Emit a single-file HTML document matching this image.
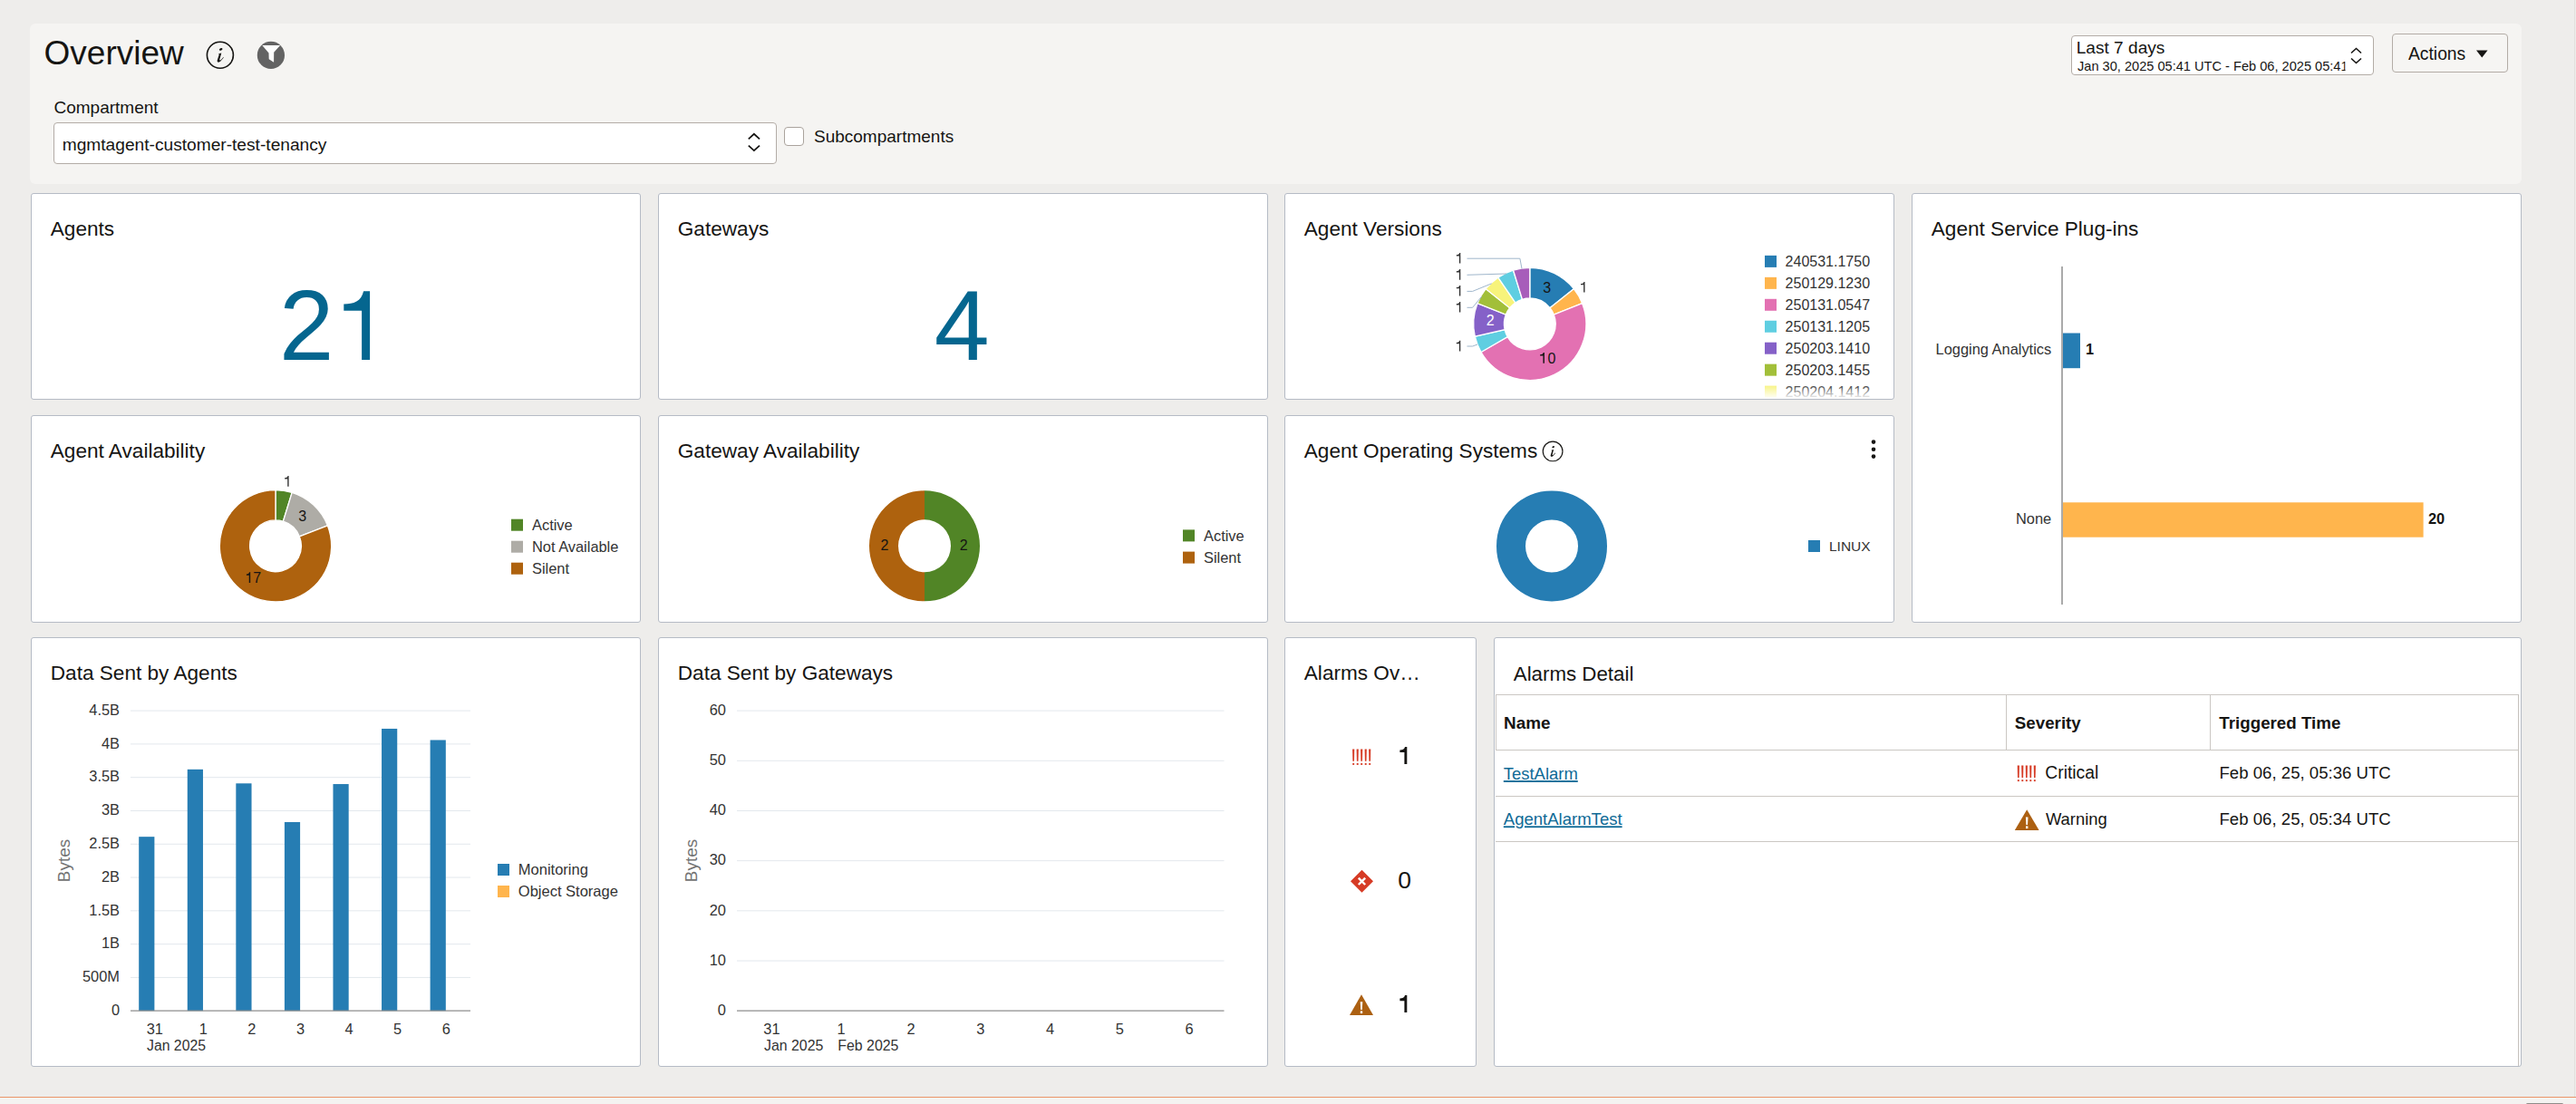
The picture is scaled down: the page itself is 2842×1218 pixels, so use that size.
<!DOCTYPE html>
<html><head><meta charset="utf-8"><title>Overview</title>
<style>
html,body{margin:0;padding:0}
body{width:2842px;height:1218px;overflow:hidden;position:relative;background:#eeedeb;font-family:"Liberation Sans", sans-serif;}
.t{position:absolute;white-space:nowrap;line-height:1;}
.card{position:absolute;box-sizing:border-box;background:#fff;border:1px solid #b5bbc5;border-radius:3px;}
svg text{font-family:"Liberation Sans", sans-serif;}
</style></head><body>
<div style="position:absolute;left:33px;top:26px;width:2749px;height:177px;background:#f5f4f2;border-radius:6px;"></div><div style="position:absolute;left:0px;top:1209.5px;width:2842px;height:1.5px;background:#ea9468;"></div><div style="position:absolute;left:0px;top:1211px;width:2842px;height:7px;background:#f4f3f1;"></div><div style="position:absolute;left:2786.5px;top:1216.5px;width:41.0px;height:3.5px;background:#8f8c89;border-radius:3px;"></div><div style="position:absolute;left:2839.5px;top:0px;width:1.0px;height:1209.5px;background:#e2e0dd;"></div><div style="position:absolute;left:59px;top:135px;width:798px;height:46px;box-sizing:border-box;background:#fff;border:1px solid #b3aca6;border-radius:4px"></div><div style="position:absolute;left:865px;top:140px;width:21.5px;height:21px;box-sizing:border-box;background:#fff;border:1px solid #aaa39d;border-radius:4px"></div><div style="position:absolute;left:2285px;top:39px;width:334px;height:44px;box-sizing:border-box;background:#fff;border:1px solid #b3aca6;border-radius:4px;overflow:hidden"></div><div style="position:absolute;left:2639px;top:37px;width:128px;height:43px;box-sizing:border-box;background:#f6f5f3;border:1px solid #b3aca6;border-radius:4px"></div><div class="card" style="left:34px;top:213px;width:673px;height:228px"></div><div class="card" style="left:726px;top:213px;width:673px;height:228px"></div><div class="card" style="left:1417px;top:213px;width:673px;height:228px"></div><div class="card" style="left:2109px;top:213px;width:673px;height:474px"></div><div class="card" style="left:34px;top:458px;width:673px;height:229px"></div><div class="card" style="left:726px;top:458px;width:673px;height:229px"></div><div class="card" style="left:1417px;top:458px;width:673px;height:229px"></div><div class="card" style="left:34px;top:703px;width:673px;height:474px"></div><div class="card" style="left:726px;top:703px;width:673px;height:474px"></div><div class="card" style="left:1417px;top:703px;width:212px;height:474px"></div><div class="card" style="left:1648px;top:703px;width:1134px;height:474px"></div><div style="position:absolute;left:1650px;top:766px;width:1128.5px;height:62px;box-sizing:border-box;border:1px solid #cbc7c3;border-right:1px solid #cbc7c3"></div><div style="position:absolute;left:2213px;top:767px;width:1px;height:60px;background:#cbc7c3;"></div><div style="position:absolute;left:2438px;top:767px;width:1px;height:60px;background:#cbc7c3;"></div><div style="position:absolute;left:2777.5px;top:766px;width:1.0px;height:410px;background:#c5c1bc;"></div><div style="position:absolute;left:1650px;top:878px;width:1128px;height:1px;background:#cbc7c3;"></div><div style="position:absolute;left:1650px;top:928px;width:1128px;height:1px;background:#cbc7c3;"></div>
<svg width="2842" height="1218" viewBox="0 0 2842 1218" style="position:absolute;left:0;top:0">
<text x="48.60" y="71.20" font-size="37" fill="#161513" text-anchor="start">Overview</text><circle cx="242.9" cy="60.8" r="14.5" fill="none" stroke="#161513" stroke-width="1.6"/><g transform="translate(242.9,60.8) scale(1.0)"><ellipse cx="0.8" cy="-6.4" rx="1.9" ry="1.2" transform="rotate(-28 0.8 -6.4)" fill="#161513"/><path d="M-2.1,-1.4 L1.4,-2.4 L-0.7,5.2 Q-0.4,6.2 0.9,5.1 L3.6,2.3 L3.9,2.7 L0.5,6.7 Q-1.6,8.5 -2.9,7.5 Q-3.5,6.8 -3.1,5.5 L-1.2,-0.5 Q-1.3,-1.1 -2.1,-1.2 Z" fill="#161513"/></g><circle cx="298.9" cy="60.9" r="15.1" fill="#636363"/><path d="M289.3,49.9 L309.1,49.9 L302.2,57.7 L302.1,68.7 L296.7,65.2 L296.5,58.4 Z" fill="#fff"/><text x="59.50" y="125.20" font-size="19.0" fill="#161513" text-anchor="start">Compartment</text><text x="68.70" y="166.00" font-size="19.16" fill="#161513" text-anchor="start">mgmtagent-customer-test-tenancy</text><path d="M825.8,153.3 L831.9,147.8 L838,153.3" fill="none" stroke="#161513" stroke-width="1.8"/><path d="M825.8,160.6 L831.9,166.1 L838,160.6" fill="none" stroke="#161513" stroke-width="1.8"/><text x="898.00" y="156.90" font-size="19" fill="#161513" text-anchor="start">Subcompartments</text><text x="2290.70" y="59.30" font-size="19.1" fill="#161513" text-anchor="start">Last 7 days</text><clipPath id="dclip"><rect x="2290" y="62" width="297.5" height="20"/></clipPath><text x="2292.00" y="78.30" font-size="14.6" fill="#161513" text-anchor="start" clip-path="url(#dclip)">Jan 30, 2025 05:41 UTC - Feb 06, 2025 05:41 UTC</text><path d="M2594,58.5 L2599.5,53.5 L2605,58.5" fill="none" stroke="#161513" stroke-width="1.6"/><path d="M2594,64.5 L2599.5,69.5 L2605,64.5" fill="none" stroke="#161513" stroke-width="1.6"/><text x="2657.00" y="65.50" font-size="19.3" fill="#161513" text-anchor="start">Actions</text><path d="M2732,55.5 L2744.5,55.5 L2738.25,63.5 Z" fill="#161513"/><text x="55.80" y="259.90" font-size="22.6" fill="#161513" text-anchor="start">Agents</text><text x="747.80" y="259.90" font-size="22.6" fill="#161513" text-anchor="start">Gateways</text><text x="1438.80" y="259.90" font-size="22.6" fill="#161513" text-anchor="start">Agent Versions</text><text x="2130.80" y="259.90" font-size="22.6" fill="#161513" text-anchor="start">Agent Service Plug-ins</text><text x="55.80" y="504.90" font-size="22.6" fill="#161513" text-anchor="start">Agent Availability</text><text x="747.80" y="504.90" font-size="22.6" fill="#161513" text-anchor="start">Gateway Availability</text><text x="1438.80" y="504.90" font-size="22.6" fill="#161513" text-anchor="start">Agent Operating Systems</text><text x="55.80" y="749.90" font-size="22.6" fill="#161513" text-anchor="start">Data Sent by Agents</text><text x="747.80" y="749.90" font-size="22.6" fill="#161513" text-anchor="start">Data Sent by Gateways</text><text x="1438.80" y="749.90" font-size="22.6" fill="#161513" text-anchor="start">Alarms Ov…</text><text x="1669.80" y="751.40" font-size="22.3" fill="#161513" text-anchor="start">Alarms Detail</text><text x="308.09" y="397.00" font-size="108.5" fill="#05668f" text-anchor="start">2</text><path d="M399.1,397 L408.1,397 L408.1,321.2 L401.1,321.2 C398.6,332.4 390.3,335.4 379.3,335.4 L379.3,342.7 L399.1,342.7 Z" fill="#05668f"/><text x="1061.30" y="397.30" font-size="109.5" fill="#05668f" text-anchor="middle">4</text><path d="M1687.80,295.30 A62.1,62.1 0 0 1 1736.35,318.68 L1710.00,339.69 A28.4,28.4 0 0 0 1687.80,329.00 Z" fill="#267db3" stroke="#fff" stroke-width="1.3" stroke-linejoin="miter"/><path d="M1736.35,318.68 A62.1,62.1 0 0 1 1745.61,334.71 L1714.24,347.02 A28.4,28.4 0 0 0 1710.00,339.69 Z" fill="#ffb54d" stroke="#fff" stroke-width="1.3" stroke-linejoin="miter"/><path d="M1745.61,334.71 A62.1,62.1 0 0 1 1634.02,388.45 L1663.20,371.60 A28.4,28.4 0 0 0 1714.24,347.02 Z" fill="#e371b2" stroke="#fff" stroke-width="1.3" stroke-linejoin="miter"/><path d="M1634.02,388.45 A62.1,62.1 0 0 1 1627.26,371.22 L1660.11,363.72 A28.4,28.4 0 0 0 1663.20,371.60 Z" fill="#5fcee1" stroke="#fff" stroke-width="1.3" stroke-linejoin="miter"/><path d="M1627.26,371.22 A62.1,62.1 0 0 1 1629.99,334.71 L1661.36,347.02 A28.4,28.4 0 0 0 1660.11,363.72 Z" fill="#8561c8" stroke="#fff" stroke-width="1.3" stroke-linejoin="miter"/><path d="M1629.99,334.71 A62.1,62.1 0 0 1 1639.25,318.68 L1665.60,339.69 A28.4,28.4 0 0 0 1661.36,347.02 Z" fill="#a2bf39" stroke="#fff" stroke-width="1.3" stroke-linejoin="miter"/><path d="M1639.25,318.68 A62.1,62.1 0 0 1 1652.82,306.09 L1671.80,333.93 A28.4,28.4 0 0 0 1665.60,339.69 Z" fill="#f7f37b" stroke="#fff" stroke-width="1.3" stroke-linejoin="miter"/><path d="M1652.82,306.09 A62.1,62.1 0 0 1 1669.50,298.06 L1679.43,330.26 A28.4,28.4 0 0 0 1671.80,333.93 Z" fill="#5fcee1" stroke="#fff" stroke-width="1.3" stroke-linejoin="miter"/><path d="M1669.50,298.06 A62.1,62.1 0 0 1 1687.80,295.30 L1687.80,329.00 A28.4,28.4 0 0 0 1679.43,330.26 Z" fill="#a75dba" stroke="#fff" stroke-width="1.3" stroke-linejoin="miter"/><polyline points="1618.5,285.2 1676.9,285.2 1679,296.5" fill="none" stroke="#9fb6cb" stroke-width="1"/><polyline points="1618.5,303.3 1662,302" fill="none" stroke="#9fb6cb" stroke-width="1"/><polyline points="1618.5,321.4 1624.6,321.4 1645.7,312.8" fill="none" stroke="#9fb6cb" stroke-width="1"/><polyline points="1618.5,339.3 1624.6,339.3 1634.8,327" fill="none" stroke="#9fb6cb" stroke-width="1"/><polyline points="1618.5,382 1624.6,382 1630,380" fill="none" stroke="#9fb6cb" stroke-width="1"/><path d="M1609.90,290.60 L1611.30,290.60 L1611.30,279.00 L1610.21,279.00 C1609.83,280.71 1608.51,281.16 1606.80,281.16 L1606.80,282.41 L1609.90,282.41 Z" fill="#333333"/><path d="M1609.90,308.70 L1611.30,308.70 L1611.30,297.10 L1610.21,297.10 C1609.83,298.81 1608.51,299.26 1606.80,299.26 L1606.80,300.51 L1609.90,300.51 Z" fill="#333333"/><path d="M1609.90,326.50 L1611.30,326.50 L1611.30,314.90 L1610.21,314.90 C1609.83,316.61 1608.51,317.06 1606.80,317.06 L1606.80,318.31 L1609.90,318.31 Z" fill="#333333"/><path d="M1609.90,344.60 L1611.30,344.60 L1611.30,333.00 L1610.21,333.00 C1609.83,334.71 1608.51,335.16 1606.80,335.16 L1606.80,336.41 L1609.90,336.41 Z" fill="#333333"/><path d="M1609.90,387.40 L1611.30,387.40 L1611.30,375.80 L1610.21,375.80 C1609.83,377.51 1608.51,377.96 1606.80,377.96 L1606.80,379.21 L1609.90,379.21 Z" fill="#333333"/><path d="M1747.10,322.50 L1748.50,322.50 L1748.50,310.90 L1747.41,310.90 C1747.03,312.61 1745.71,313.06 1744.00,313.06 L1744.00,314.31 L1747.10,314.31 Z" fill="#333333"/><text x="1706.8" y="322.8" font-size="16" fill="#161513" text-anchor="middle">3</text><path d="M1702.45,400.80 L1703.90,400.80 L1703.90,389.10 L1702.77,389.10 C1702.38,390.82 1700.92,391.28 1699.10,391.28 L1699.10,392.53 L1702.45,392.53 Z" fill="#161513"/><text x="1707.4759999999999" y="400.8" font-size="16" fill="#161513" text-anchor="start">0</text><text x="1644.3" y="358.8" font-size="16" fill="#ffffff" text-anchor="middle">2</text><defs><linearGradient id="fade" x1="0" y1="0" x2="0" y2="1"><stop offset="0" stop-color="#fff" stop-opacity="0"/><stop offset="1" stop-color="#fff" stop-opacity="1"/></linearGradient></defs><rect x="1947" y="281.9" width="13" height="13" fill="#267db3"/><text x="1969.6" y="294.2" font-size="16.0" fill="#333333" text-anchor="start">240531.1750</text><rect x="1947" y="305.84999999999997" width="13" height="13" fill="#ffb54d"/><text x="1969.6" y="318.15" font-size="16.0" fill="#333333" text-anchor="start">250129.1230</text><rect x="1947" y="329.79999999999995" width="13" height="13" fill="#e371b2"/><text x="1969.6" y="342.09999999999997" font-size="16.0" fill="#333333" text-anchor="start">250131.0547</text><rect x="1947" y="353.75" width="13" height="13" fill="#5fcee1"/><text x="1969.6" y="366.05" font-size="16.0" fill="#333333" text-anchor="start">250131.1205</text><rect x="1947" y="377.7" width="13" height="13" fill="#8561c8"/><text x="1969.6" y="390.0" font-size="16.0" fill="#333333" text-anchor="start">250203.1410</text><rect x="1947" y="401.65" width="13" height="13" fill="#a2bf39"/><text x="1969.6" y="413.95" font-size="16.0" fill="#333333" text-anchor="start">250203.1455</text><rect x="1947" y="425.59999999999997" width="13" height="13" fill="#f7f37b"/><text x="1969.6" y="437.9" font-size="16.0" fill="#333333" text-anchor="start">250204.1412</text><rect x="1940" y="424" width="140" height="16" fill="url(#fade)"/><line x1="2275" y1="294" x2="2275" y2="667" stroke="#8e8e8e" stroke-width="1.5"/><rect x="2276" y="367.5" width="19" height="38.7" fill="#267db3"/><rect x="2276" y="554.3" width="397.6" height="38.4" fill="#ffb54d"/><text x="2263.2" y="391" font-size="16.4" fill="#333333" text-anchor="end">Logging Analytics</text><text x="2263.2" y="577.9" font-size="16.4" fill="#333333" text-anchor="end">None</text><text x="2301" y="391" font-size="16.4" fill="#161513" text-anchor="start" font-weight="700">1</text><text x="2679" y="577.9" font-size="16.4" fill="#161513" text-anchor="start" font-weight="700">20</text><path d="M304.00,540.65 A61.65,61.65 0 0 1 322.17,543.39 L312.36,575.21 A28.35,28.35 0 0 0 304.00,573.95 Z" fill="#518526" stroke="#fff" stroke-width="1.3" stroke-linejoin="miter"/><path d="M322.17,543.39 A61.65,61.65 0 0 1 361.39,579.78 L330.39,591.94 A28.35,28.35 0 0 0 312.36,575.21 Z" fill="#aeaca6" stroke="#fff" stroke-width="1.3" stroke-linejoin="miter"/><path d="M361.39,579.78 A61.65,61.65 0 1 1 304.00,540.65 L304.00,573.95 A28.35,28.35 0 1 0 330.39,591.94 Z" fill="#ae620e" stroke="#fff" stroke-width="1.3" stroke-linejoin="miter"/><path d="M317.20,536.70 L318.60,536.70 L318.60,525.10 L317.51,525.10 C317.13,526.81 315.81,527.26 314.10,527.26 L314.10,528.51 L317.20,528.51 Z" fill="#333333"/><text x="333.6" y="574.8" font-size="16" fill="#161513" text-anchor="middle">3</text><path d="M274.75,642.90 L276.20,642.90 L276.20,631.20 L275.07,631.20 C274.68,632.92 273.53,633.38 271.90,633.38 L271.90,634.63 L274.75,634.63 Z" fill="#161513"/><text x="279.2392" y="642.9" font-size="16" fill="#161513" text-anchor="start">7</text><rect x="564" y="572.7" width="13" height="13" fill="#518526"/><text x="587" y="584.8000000000001" font-size="16.4" fill="#333333" text-anchor="start">Active</text><rect x="564" y="596.7" width="13" height="13" fill="#aeaca6"/><text x="587" y="608.8000000000001" font-size="16.4" fill="#333333" text-anchor="start">Not Available</text><rect x="564" y="620.7" width="13" height="13" fill="#ae620e"/><text x="587" y="632.8000000000001" font-size="16.4" fill="#333333" text-anchor="start">Silent</text><path d="M1020.00,541.30 A61,61 0 0 1 1020.00,663.30 L1020.00,631.30 A29,29 0 0 0 1020.00,573.30 Z" fill="#518526"/><path d="M1020.00,663.30 A61,61 0 0 1 1020.00,541.30 L1020.00,573.30 A29,29 0 0 0 1020.00,631.30 Z" fill="#ae620e"/><text x="976" y="607.3" font-size="16" fill="#161513" text-anchor="middle">2</text><text x="1063.2" y="607.3" font-size="16" fill="#161513" text-anchor="middle">2</text><rect x="1305" y="584.4" width="13" height="13" fill="#518526"/><text x="1328" y="596.5" font-size="16.4" fill="#333333" text-anchor="start">Active</text><rect x="1305" y="608.6" width="13" height="13" fill="#ae620e"/><text x="1328" y="620.7" font-size="16.4" fill="#333333" text-anchor="start">Silent</text><circle cx="1713.1" cy="497.9" r="10.85" fill="none" stroke="#161513" stroke-width="1.15"/><g transform="translate(1713.1,497.9) scale(0.7482758620689655)"><ellipse cx="0.8" cy="-6.4" rx="1.9" ry="1.2" transform="rotate(-28 0.8 -6.4)" fill="#161513"/><path d="M-2.1,-1.4 L1.4,-2.4 L-0.7,5.2 Q-0.4,6.2 0.9,5.1 L3.6,2.3 L3.9,2.7 L0.5,6.7 Q-1.6,8.5 -2.9,7.5 Q-3.5,6.8 -3.1,5.5 L-1.2,-0.5 Q-1.3,-1.1 -2.1,-1.2 Z" fill="#161513"/></g><circle cx="2067" cy="487.6" r="2.3" fill="#161513"/><circle cx="2067" cy="495.8" r="2.3" fill="#161513"/><circle cx="2067" cy="503.6" r="2.3" fill="#161513"/><circle cx="1712" cy="602.4" r="45.0" fill="none" stroke="#267db3" stroke-width="32"/><rect x="1995" y="596" width="13" height="13" fill="#267db3"/><text x="2018" y="608.1" font-size="15.5" fill="#333333" text-anchor="start">LINUX</text><text x="132" y="1120.0" font-size="16.4" fill="#333333" text-anchor="end">0</text><line x1="144" y1="1078.41" x2="519" y2="1078.41" stroke="#e3e8ed" stroke-width="1"/><text x="132" y="1083.211111111111" font-size="16.4" fill="#333333" text-anchor="end">500M</text><line x1="144" y1="1041.62" x2="519" y2="1041.62" stroke="#e3e8ed" stroke-width="1"/><text x="132" y="1046.4222222222222" font-size="16.4" fill="#333333" text-anchor="end">1B</text><line x1="144" y1="1004.83" x2="519" y2="1004.83" stroke="#e3e8ed" stroke-width="1"/><text x="132" y="1009.6333333333333" font-size="16.4" fill="#333333" text-anchor="end">1.5B</text><line x1="144" y1="968.04" x2="519" y2="968.04" stroke="#e3e8ed" stroke-width="1"/><text x="132" y="972.8444444444444" font-size="16.4" fill="#333333" text-anchor="end">2B</text><line x1="144" y1="931.26" x2="519" y2="931.26" stroke="#e3e8ed" stroke-width="1"/><text x="132" y="936.0555555555555" font-size="16.4" fill="#333333" text-anchor="end">2.5B</text><line x1="144" y1="894.47" x2="519" y2="894.47" stroke="#e3e8ed" stroke-width="1"/><text x="132" y="899.2666666666667" font-size="16.4" fill="#333333" text-anchor="end">3B</text><line x1="144" y1="857.68" x2="519" y2="857.68" stroke="#e3e8ed" stroke-width="1"/><text x="132" y="862.4777777777778" font-size="16.4" fill="#333333" text-anchor="end">3.5B</text><line x1="144" y1="820.89" x2="519" y2="820.89" stroke="#e3e8ed" stroke-width="1"/><text x="132" y="825.6888888888889" font-size="16.4" fill="#333333" text-anchor="end">4B</text><line x1="144" y1="784.10" x2="519" y2="784.10" stroke="#e3e8ed" stroke-width="1"/><text x="132" y="788.9" font-size="16.4" fill="#333333" text-anchor="end">4.5B</text><rect x="153.19" y="923.16" width="17.2" height="192.04" fill="#267db3"/><text x="170.79" y="1140.8" font-size="16.4" fill="#333333" text-anchor="middle">31</text><rect x="206.76" y="848.85" width="17.2" height="266.35" fill="#267db3"/><text x="224.36" y="1140.8" font-size="16.4" fill="#333333" text-anchor="middle">1</text><rect x="260.33" y="864.30" width="17.2" height="250.90" fill="#267db3"/><text x="277.93" y="1140.8" font-size="16.4" fill="#333333" text-anchor="middle">2</text><rect x="313.90" y="906.97" width="17.2" height="208.23" fill="#267db3"/><text x="331.50" y="1140.8" font-size="16.4" fill="#333333" text-anchor="middle">3</text><rect x="367.47" y="865.04" width="17.2" height="250.16" fill="#267db3"/><text x="385.07" y="1140.8" font-size="16.4" fill="#333333" text-anchor="middle">4</text><rect x="421.04" y="803.97" width="17.2" height="311.23" fill="#267db3"/><text x="438.64" y="1140.8" font-size="16.4" fill="#333333" text-anchor="middle">5</text><rect x="474.61" y="816.47" width="17.2" height="298.73" fill="#267db3"/><text x="492.21" y="1140.8" font-size="16.4" fill="#333333" text-anchor="middle">6</text><line x1="144" y1="1115.2" x2="519" y2="1115.2" stroke="#8e8e8e" stroke-width="1.3"/><text x="162" y="1158.8" font-size="15.8" fill="#333333" text-anchor="start">Jan 2025</text><text x="0" y="0" font-size="18.9" fill="#737373" text-anchor="middle" transform="translate(77,949.5) rotate(-90)">Bytes</text><rect x="549" y="953.0" width="13" height="13" fill="#267db3"/><text x="571.8" y="965.1" font-size="16.5" fill="#333333" text-anchor="start">Monitoring</text><rect x="549" y="977.0" width="13" height="13" fill="#ffb54d"/><text x="571.8" y="989.1" font-size="16.5" fill="#333333" text-anchor="start">Object Storage</text><text x="800.9" y="1120.0" font-size="16.4" fill="#333333" text-anchor="end">0</text><line x1="813" y1="1060.02" x2="1350.5" y2="1060.02" stroke="#e3e8ed" stroke-width="1"/><text x="800.9" y="1064.8166666666666" font-size="16.4" fill="#333333" text-anchor="end">10</text><line x1="813" y1="1004.83" x2="1350.5" y2="1004.83" stroke="#e3e8ed" stroke-width="1"/><text x="800.9" y="1009.6333333333333" font-size="16.4" fill="#333333" text-anchor="end">20</text><line x1="813" y1="949.65" x2="1350.5" y2="949.65" stroke="#e3e8ed" stroke-width="1"/><text x="800.9" y="954.45" font-size="16.4" fill="#333333" text-anchor="end">30</text><line x1="813" y1="894.47" x2="1350.5" y2="894.47" stroke="#e3e8ed" stroke-width="1"/><text x="800.9" y="899.2666666666667" font-size="16.4" fill="#333333" text-anchor="end">40</text><line x1="813" y1="839.28" x2="1350.5" y2="839.28" stroke="#e3e8ed" stroke-width="1"/><text x="800.9" y="844.0833333333333" font-size="16.4" fill="#333333" text-anchor="end">50</text><line x1="813" y1="784.10" x2="1350.5" y2="784.10" stroke="#e3e8ed" stroke-width="1"/><text x="800.9" y="788.9" font-size="16.4" fill="#333333" text-anchor="end">60</text><line x1="813" y1="1115.2" x2="1350.5" y2="1115.2" stroke="#8e8e8e" stroke-width="1.3"/><text x="851.39" y="1140.8" font-size="16.4" fill="#333333" text-anchor="middle">31</text><text x="928.18" y="1140.8" font-size="16.4" fill="#333333" text-anchor="middle">1</text><text x="1004.96" y="1140.8" font-size="16.4" fill="#333333" text-anchor="middle">2</text><text x="1081.75" y="1140.8" font-size="16.4" fill="#333333" text-anchor="middle">3</text><text x="1158.54" y="1140.8" font-size="16.4" fill="#333333" text-anchor="middle">4</text><text x="1235.32" y="1140.8" font-size="16.4" fill="#333333" text-anchor="middle">5</text><text x="1312.11" y="1140.8" font-size="16.4" fill="#333333" text-anchor="middle">6</text><text x="843" y="1158.8" font-size="15.9" fill="#333333" text-anchor="start">Jan 2025</text><text x="924.3" y="1158.8" font-size="15.9" fill="#333333" text-anchor="start">Feb 2025</text><text x="0" y="0" font-size="18.9" fill="#737373" text-anchor="middle" transform="translate(769.2,949.5) rotate(-90)">Bytes</text><path d="M1492.10,826.40 L1494.30,826.40 L1494.00,839.70 L1492.40,839.70 Z" fill="#d63b25"/><rect x="1492.25" y="842.00" width="1.90" height="1.90" fill="#d63b25"/><path d="M1496.60,826.40 L1498.80,826.40 L1498.50,839.70 L1496.90,839.70 Z" fill="#d63b25"/><rect x="1496.75" y="842.00" width="1.90" height="1.90" fill="#d63b25"/><path d="M1501.10,826.40 L1503.30,826.40 L1503.00,839.70 L1501.40,839.70 Z" fill="#d63b25"/><rect x="1501.25" y="842.00" width="1.90" height="1.90" fill="#d63b25"/><path d="M1505.60,826.40 L1507.80,826.40 L1507.50,839.70 L1505.90,839.70 Z" fill="#d63b25"/><rect x="1505.75" y="842.00" width="1.90" height="1.90" fill="#d63b25"/><path d="M1510.10,826.40 L1512.30,826.40 L1512.00,839.70 L1510.40,839.70 Z" fill="#d63b25"/><rect x="1510.25" y="842.00" width="1.90" height="1.90" fill="#d63b25"/><path d="M1549.40,842.90 L1552.30,842.90 L1552.30,823.90 L1550.04,823.90 C1549.25,826.69 1547.40,827.43 1544.40,827.43 L1544.40,830.03 L1549.40,830.03 Z" fill="#161513"/><path d="M1502.5,959.8 L1515,972.3 L1502.5,984.8 L1490,972.3 Z" fill="#d63b25"/><path d="M1498.8,968.6 L1506.2,976 M1506.2,968.6 L1498.8,976" stroke="#fff" stroke-width="2.4"/><text x="1549.70" y="979.90" font-size="26.5" fill="#161513" text-anchor="middle">0</text><path d="M1502.00,1097.20 L1515.00,1119.90 L1489.00,1119.90 Z" fill="#ac6012"/><path d="M1500.70,1105.37 L1503.30,1105.37 L1502.80,1114.00 L1501.20,1114.00 Z" fill="#fff"/><rect x="1500.80" y="1115.36" width="2.4" height="2.72" fill="#fff"/><path d="M1549.40,1117.00 L1552.30,1117.00 L1552.30,1098.10 L1550.04,1098.10 C1549.25,1100.88 1547.40,1101.62 1544.40,1101.62 L1544.40,1104.22 L1549.40,1104.22 Z" fill="#161513"/><text x="1659.00" y="804.20" font-size="18.9" fill="#161513" text-anchor="start" font-weight="700">Name</text><text x="2222.80" y="804.20" font-size="18.75" fill="#161513" text-anchor="start" font-weight="700">Severity</text><text x="2448.30" y="804.20" font-size="18.75" fill="#161513" text-anchor="start" font-weight="700">Triggered Time</text><text x="1658.80" y="860.10" font-size="18.45" fill="#0f6a96" text-anchor="start" text-decoration="underline">TestAlarm</text><text x="1658.80" y="910.30" font-size="18.55" fill="#0f6a96" text-anchor="start" text-decoration="underline">AgentAlarmTest</text><path d="M2225.70,844.60 L2227.90,844.60 L2227.60,857.90 L2226.00,857.90 Z" fill="#d63b25"/><rect x="2225.85" y="860.20" width="1.90" height="1.90" fill="#d63b25"/><path d="M2230.20,844.60 L2232.40,844.60 L2232.10,857.90 L2230.50,857.90 Z" fill="#d63b25"/><rect x="2230.35" y="860.20" width="1.90" height="1.90" fill="#d63b25"/><path d="M2234.70,844.60 L2236.90,844.60 L2236.60,857.90 L2235.00,857.90 Z" fill="#d63b25"/><rect x="2234.85" y="860.20" width="1.90" height="1.90" fill="#d63b25"/><path d="M2239.20,844.60 L2241.40,844.60 L2241.10,857.90 L2239.50,857.90 Z" fill="#d63b25"/><rect x="2239.35" y="860.20" width="1.90" height="1.90" fill="#d63b25"/><path d="M2243.70,844.60 L2245.90,844.60 L2245.60,857.90 L2244.00,857.90 Z" fill="#d63b25"/><rect x="2243.85" y="860.20" width="1.90" height="1.90" fill="#d63b25"/><text x="2256.30" y="859.10" font-size="19.3" fill="#161513" text-anchor="start">Critical</text><path d="M2236.20,893.30 L2249.60,915.90 L2222.80,915.90 Z" fill="#ac6012"/><path d="M2234.90,901.44 L2237.50,901.44 L2237.00,910.02 L2235.40,910.02 Z" fill="#fff"/><rect x="2235.00" y="911.38" width="2.4" height="2.71" fill="#fff"/><text x="2256.90" y="909.60" font-size="18.4" fill="#161513" text-anchor="start">Warning</text><text x="2448.50" y="859.10" font-size="18.62" fill="#161513" text-anchor="start">Feb 06, 25, 05:36 UTC</text><text x="2448.50" y="909.60" font-size="18.62" fill="#161513" text-anchor="start">Feb 06, 25, 05:34 UTC</text>
</svg>
</body></html>
